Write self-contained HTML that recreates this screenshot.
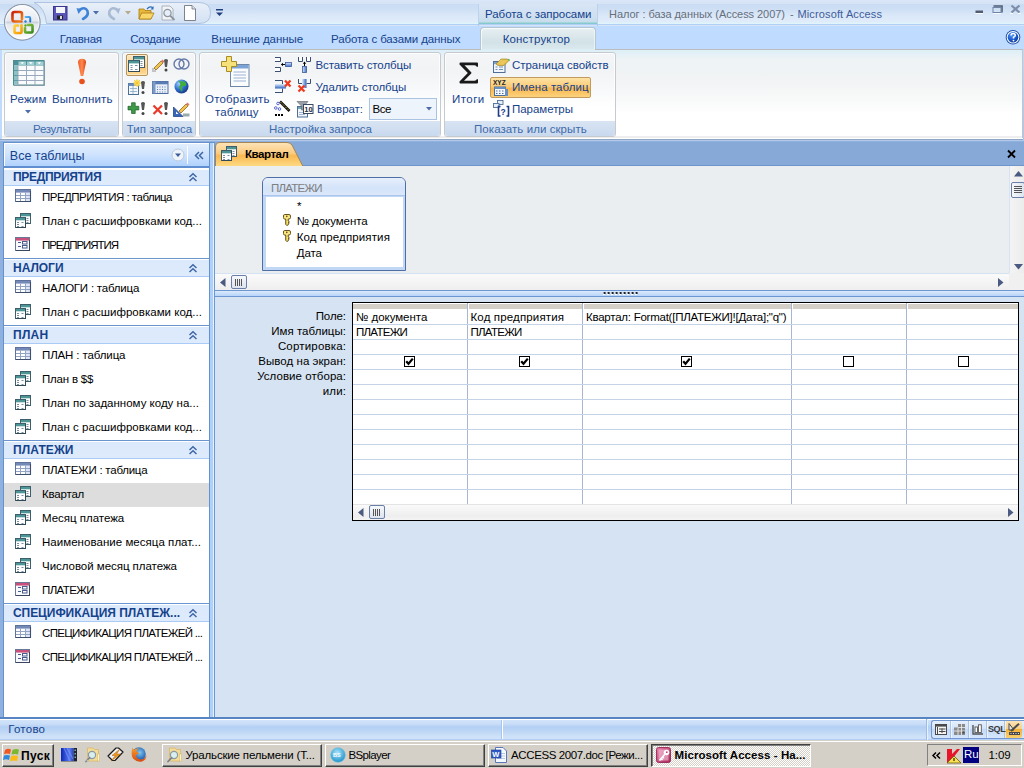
<!DOCTYPE html><html><head><meta charset="utf-8"><style>
*{box-sizing:border-box;margin:0;padding:0}
html,body{width:1024px;height:768px;overflow:hidden;background:#8EB1E0;font-family:"Liberation Sans",sans-serif;font-size:11px;color:#000}
.a{position:absolute;white-space:nowrap}
svg{position:absolute;overflow:visible}
.rt{color:#15428B;font-size:11.5px;position:absolute;white-space:nowrap}
.gl{position:absolute;color:#3E6AAA;font-size:11.5px;white-space:nowrap}
.grp{position:absolute;top:52px;height:85px;border:1px solid #C6C9CE;border-radius:3px;background:linear-gradient(#F3F5F7 0%,#F1F3F5 20%,#F8F9FA 45%,#FFFFFF 65%,#FFFFFF 100%);box-shadow:inset 0 0 0 1px rgba(255,255,255,.8)}
.glb{position:absolute;left:0;right:0;bottom:0;height:15px;background:linear-gradient(#D8E4F3,#C9D9EE);border-radius:0 0 3px 3px}
.ni{position:absolute;left:42px;font-size:11.5px;white-space:nowrap;color:#000}
.gh{position:absolute;left:4px;width:205px;height:19px;border-top:1px solid #6B95CE;background:linear-gradient(#DBE9FC,#DEEBFC);box-shadow:inset 0 1px 0 #fff;border-bottom:1px solid #A9CBF5}
.ght{position:absolute;left:9px;top:2px;font-weight:bold;font-size:11.5px;color:#15428B}
.lbl{position:absolute;right:679px;font-size:11px;white-space:nowrap;text-align:right}
.cell{position:absolute;font-size:11px;white-space:nowrap}
.tb{position:absolute;top:744px;height:23px;background:#D4D0C8;border:1px solid;border-color:#fff #404040 #404040 #fff;box-shadow:inset -1px -1px 0 #808080,inset 1px 1px 0 #D4D0C8;font-size:11px}
.tbt{position:absolute;left:24px;top:5px;white-space:nowrap}
</style></head><body>
<div class="a" style="left:0;top:0;width:1024px;height:25px;background:linear-gradient(#DAE7FB 0,#D8E5F6 2px,#D6E4F4 3.5px,#C9DCF4 4px,#CCDEF4 8px,#DBE8F8 16px,#E0ECFA 22px,#E0F4FC 23px,#E0F4FC 24px)"></div>
<div class="a" style="left:0;top:24px;width:1024px;height:1px;background:#B2CFF4"></div>
<div class="a" style="left:0;top:25px;width:1024px;height:1px;background:#D5E4F6"></div>
<svg style="left:0;top:0" width="215" height="26"><defs><linearGradient id="qg" x1="0" y1="0" x2="0" y2="1"><stop offset="0" stop-color="#E9F0F9"/><stop offset="1" stop-color="#D3E1F3"/></linearGradient></defs><path d="M34 2.5 H199 Q210.5 2.5 210.5 13 Q210.5 23.5 199 23.5 H46.5 Q45 7 34 2.5Z" fill="url(#qg)" stroke="#AFC4E0" stroke-width="1"/></svg>
<svg style="left:53px;top:6px" width="15" height="15" viewBox="0 0 15 15">
<rect x=".5" y=".5" width="13.5" height="13.5" fill="#5A55B8" stroke="#3A3690"/>
<rect x="3" y="1" width="9" height="6" fill="#F4F6FA"/><rect x="4" y="9.5" width="6" height="4" fill="#222"/><rect x="7" y="10" width="2" height="3" fill="#ddd"/></svg>
<svg style="left:76px;top:6px" width="14" height="15" viewBox="0 0 14 15">
<path d="M3 4 Q9 0 11.5 5 Q13 10 7 13" fill="none" stroke="#3F83D8" stroke-width="2.6" stroke-linecap="round"/>
<path d="M0.5 2 L6 3.5 L2.5 8 Z" fill="#3F83D8"/></svg>
<svg style="left:93px;top:11px" width="7" height="4"><path d="M0 0 H6 L3 3.5Z" fill="#4B6DA8"/></svg>
<svg style="left:107px;top:6px" width="14" height="15" viewBox="0 0 14 15">
<path d="M11 4 Q5 0 2.5 5 Q1 10 7 13" fill="none" stroke="#A9BBD2" stroke-width="2.6" stroke-linecap="round"/>
<path d="M13.5 2 L8 3.5 L11.5 8 Z" fill="#A9BBD2"/></svg>
<svg style="left:125px;top:11px" width="7" height="4"><path d="M0 0 H6 L3 3.5Z" fill="#B7A98A"/></svg>
<svg style="left:138px;top:5px" width="17" height="16" viewBox="0 0 17 16">
<path d="M1 4 H6 L7 5.5 H13 V14 H1Z" fill="#E8B83A" stroke="#A97B12" stroke-width=".8"/>
<path d="M1 14 L3.5 8 H16 L13 14Z" fill="#F8D66A" stroke="#A97B12" stroke-width=".8"/>
<path d="M9 4 Q12 0.5 15 3" fill="none" stroke="#2F6DB8" stroke-width="1.2"/><path d="M15.5 1 V4.5 H12.5Z" fill="#2F6DB8"/></svg>
<svg style="left:161px;top:5px" width="15" height="16" viewBox="0 0 15 16">
<path d="M1 1 H9 L12 4 V15 H1Z" fill="#F3F4F6" stroke="#9AA3AE" stroke-width=".8"/>
<circle cx="6.5" cy="8" r="3.6" fill="#E6EEF7" stroke="#8D97A3" stroke-width="1.3"/><path d="M9 10.5 L13.5 15" stroke="#8D97A3" stroke-width="2"/></svg>
<svg style="left:184px;top:5px" width="12" height="16" viewBox="0 0 12 16">
<path d="M.5 .5 H8 L11.5 4 V15.5 H.5Z" fill="#FFFFFF" stroke="#6E7682" stroke-width=".9"/><path d="M8 .5 V4 H11.5" fill="#DDE2E8" stroke="#6E7682" stroke-width=".8"/></svg>
<svg style="left:216px;top:9px" width="7" height="8"><rect x="0" y="0" width="7" height="1.5" fill="#1F3F7F"/><path d="M0 3.5 H7 L3.5 7Z" fill="#1F3F7F"/></svg>
<div class="a" style="left:478px;top:4px;width:120px;height:20px;background:linear-gradient(#D8E6F5,#CFE0F1 60%,#C4DCEA);border-left:1px solid #BCD2EA;border-right:1px solid #BCD2EA"></div>
<div class="a" style="left:479px;top:22px;width:118px;height:1px;background:#A6D6DC"></div>
<div class="a" style="left:479px;top:23px;width:118px;height:1px;background:#86C8D0"></div>
<div class="a" style="left:478px;top:24px;width:1px;height:26px;background:#A9CBEF"></div>
<div class="a" style="left:597px;top:24px;width:1px;height:26px;background:#A9CBEF"></div>
<div class="a" style="left:485.00px;top:8px;font-size:11.5px;color:#15428B;line-height:normal;letter-spacing:-0.044px">Работа с запросами</div>
<div class="a" style="left:609.00px;top:8px;font-size:11px;color:#666F7D;line-height:normal;letter-spacing:-0.051px">Налог : база данных (Access 2007)</div>
<div class="a" style="left:790.00px;top:8px;font-size:11px;color:#666F7D;line-height:normal">-</div>
<div class="a" style="left:797.50px;top:8px;font-size:11px;color:#3E5C9A;line-height:normal;letter-spacing:0.132px">Microsoft Access</div>
<svg style="left:975px;top:10px" width="9" height="5"><rect x="0.5" y="0.5" width="7.5" height="2.5" fill="#4F5C72"/><rect x="0.5" y="3" width="7.5" height="1" fill="#fff" opacity=".8"/></svg>
<svg style="left:992px;top:4px" width="11" height="11"><path d="M1.5 2 H10 V8.5" fill="none" stroke="#4F5C72" stroke-width="1.6"/><rect x="1" y="3.5" width="8" height="5" fill="none" stroke="#6E85A8" stroke-width="1"/><rect x="1" y="9" width="8" height="1" fill="#fff" opacity=".8"/></svg>
<svg style="left:1010px;top:4px" width="11" height="11"><path d="M1.5 1.5 L9.5 8.5 M9.5 1.5 L1.5 8.5" stroke="#7C8EAA" stroke-width="2.2"/><path d="M0.5 9.5 H3 M8 9.5 H10.5" stroke="#fff" stroke-width="1"/></svg>
<div class="a" style="left:0;top:26px;width:1024px;height:25px;background:#BFDBFF"></div>
<div class="a" style="left:59.80px;top:33px;font-size:11.5px;color:#15428B;line-height:normal;letter-spacing:-0.262px">Главная</div>
<div class="a" style="left:130.20px;top:33px;font-size:11.5px;color:#15428B;line-height:normal;letter-spacing:-0.195px">Создание</div>
<div class="a" style="left:211.30px;top:33px;font-size:11.5px;color:#15428B;line-height:normal;letter-spacing:-0.052px">Внешние данные</div>
<div class="a" style="left:331.00px;top:33px;font-size:11.5px;color:#15428B;line-height:normal;letter-spacing:-0.104px">Работа с базами данных</div>
<div class="a" style="left:480px;top:27px;width:116px;height:25px;border:1px solid #B4C6CF;border-bottom:none;border-radius:4px 4px 0 0;background:linear-gradient(#E8F0F3,#DCE8EC 30%,#D2E2E7 60%,#DCECF0);box-shadow:inset 1px 1px 0 rgba(255,255,255,.7),inset -1px 0 0 rgba(255,255,255,.5)"></div>
<div class="a" style="left:502.70px;top:33px;font-size:11.5px;color:#15428B;line-height:normal;letter-spacing:0.163px">Конструктор</div>
<svg style="left:1005px;top:29px" width="17" height="17" viewBox="0 0 17 17"><defs><radialGradient id="hg" cx="40%" cy="30%" r="70%"><stop offset="0" stop-color="#5A9BF5"/><stop offset=".6" stop-color="#1D5FD0"/><stop offset="1" stop-color="#0E3A9A"/></radialGradient></defs>
<circle cx="8" cy="8.3" r="7.3" fill="#1B4FA8"/><circle cx="8" cy="8.3" r="6.3" fill="#fff"/><circle cx="8" cy="8.3" r="5.3" fill="url(#hg)"/>
<path d="M6 6.5 Q6 4.5 8.2 4.5 Q10.3 4.5 10.3 6.3 Q10.3 7.6 8.5 8.3 V9.6" fill="none" stroke="#fff" stroke-width="1.5"/><circle cx="8.5" cy="11.6" r=".9" fill="#fff"/></svg>
<div class="a" style="left:0;top:49px;width:1024px;height:93px;background:linear-gradient(#BCBCBC 0,#BCBCBC 1px,#DCEFF8 1px,#EEF3F5 10px,#F1F3F4 30px,#FAFBFB 55px,#FFFFFF 65px,#FFFFFF 87px,#DCDCDC 88px,#FFFFFF 89px,#FFFFFF 90px,#8FA5C6 90px,#8FA5C6 91px,#B3C9E7 91px,#B3C9E7 92px,#8EB1E0 92px)"></div>
<div class="a" style="left:0;top:50px;width:2px;height:89px;background:#BFDBFF"></div>
<div class="a" style="left:481px;top:49px;width:114px;height:1px;background:#DCEEF4"></div>
<div class="a" style="left:1022px;top:50px;width:1px;height:88px;background:linear-gradient(#C8C8C8,#C4C4C4)"></div>
<div class="a" style="left:1023px;top:49px;width:1px;height:91px;background:linear-gradient(#BCD9FE,#A6C6EE)"></div>
<svg style="left:0;top:0" width="46" height="46" viewBox="0 0 46 46">
<defs><linearGradient id="ob" x1="0" y1="0" x2="0" y2="1"><stop offset="0" stop-color="#FBFCFD"/><stop offset=".45" stop-color="#E6EAF0"/><stop offset=".5" stop-color="#C9D1DC"/><stop offset=".56" stop-color="#E3E8EE"/><stop offset="1" stop-color="#FFFFFF"/></linearGradient>
<linearGradient id="lr" x1="0" y1="0" x2="1" y2="1"><stop offset="0" stop-color="#C8200A"/><stop offset="1" stop-color="#F38A1A"/></linearGradient>
<linearGradient id="ly" x1="0" y1="0" x2="1" y2="1"><stop offset="0" stop-color="#FFD040"/><stop offset="1" stop-color="#F59A00"/></linearGradient>
<linearGradient id="lg" x1="0" y1="0" x2="1" y2="1"><stop offset="0" stop-color="#8CC63F"/><stop offset="1" stop-color="#3C8A1E"/></linearGradient>
<linearGradient id="lb" x1="0" y1="0" x2="1" y2="1"><stop offset="0" stop-color="#5AB4F0"/><stop offset="1" stop-color="#1E6ED0"/></linearGradient></defs>
<circle cx="22.3" cy="22.3" r="17.8" fill="url(#ob)" stroke="#8793A4" stroke-width="1.1"/>
<circle cx="22.3" cy="22.3" r="16.6" fill="none" stroke="#FFFFFF" stroke-width=".8" opacity=".8"/>
<path d="M20 21.5 H14.5 Q12.5 21.5 12.5 19.5 V14 Q12.5 12 14.5 12 H20 Q22 12 22 14 V19" fill="none" stroke="url(#lr)" stroke-width="2.6" stroke-linecap="round"/>
<path d="M25.5 17 H29 Q30.2 17 30.2 18.2 V21.5" fill="none" stroke="url(#lb)" stroke-width="2" stroke-linecap="round"/>
<path d="M21.5 25.5 V32 Q21.5 33 20.5 33 H15.5 Q14.5 33 14.5 32 V26.5 Q14.5 25.5 15.5 25.5 H18" fill="none" stroke="url(#ly)" stroke-width="2.6" stroke-linecap="round"/>
<path d="M25 28 V31.5 Q25 32.5 26 32.5 H31.5 Q32.5 32.5 32.5 31.5 V26 Q32.5 25 31.5 25 H28" fill="none" stroke="url(#lg)" stroke-width="2.6" stroke-linecap="round"/>
<circle cx="21.5" cy="21.5" r="1.2" fill="#E8601A"/><circle cx="25.5" cy="21.5" r="1.2" fill="#2A7FD8"/><circle cx="21.5" cy="25.5" r="1.2" fill="#F8B830"/><circle cx="25.5" cy="25.5" r="1.2" fill="#5AAA2A"/>
</svg>
<div class="grp" style="left:4px;width:115px"><div class="glb"></div></div>
<div class="a" style="left:33.00px;top:123px;font-size:11.5px;color:#3E6AAA;line-height:normal;letter-spacing:-0.285px">Результаты</div>
<div class="grp" style="left:122px;width:74px"><div class="glb"></div></div>
<div class="a" style="left:126.70px;top:123px;font-size:11.5px;color:#3E6AAA;line-height:normal;letter-spacing:0.020px">Тип запроса</div>
<div class="grp" style="left:199px;width:242px"><div class="glb"></div></div>
<div class="a" style="left:269.00px;top:123px;font-size:11.5px;color:#3E6AAA;line-height:normal;letter-spacing:0.022px">Настройка запроса</div>
<div class="grp" style="left:444px;width:172px"><div class="glb"></div></div>
<div class="a" style="left:474.00px;top:123px;font-size:11.5px;color:#3E6AAA;line-height:normal;letter-spacing:0.065px">Показать или скрыть</div>
<svg style="left:13px;top:60px" width="32" height="26" viewBox="0 0 32 26">
<rect x=".5" y=".5" width="30.5" height="24.5" fill="#FAFBFD" stroke="#4E8A90"/>
<rect x="1" y="1" width="30" height="4.5" fill="#4E9098"/><rect x="5.5" y="1.5" width="7.5" height="3.5" fill="#9FD0D2"/><rect x="14" y="1.5" width="7.5" height="3.5" fill="#9FD0D2"/><rect x="22.5" y="1.5" width="8" height="3.5" fill="#9FD0D2"/>
<rect x="1" y="5.5" width="4" height="19" fill="#8CC2C5"/>
<path d="M5 5.5 V25 M13.5 5.5 V25 M22 5.5 V25 M1 10.5 H31 M1 15.5 H31 M1 20.5 H31" stroke="#9AA9BE" stroke-width="1"/>
<path d="M1 10.5 H5 M1 15.5 H5 M1 20.5 H5" stroke="#5E9CA2" stroke-width="1"/>
<path d="M7.5 2.3 H11 L9.25 4.3Z M16 2.3 H19.5 L17.75 4.3Z M24.5 2.3 H28 L26.25 4.3Z" fill="#fff"/>
<path d="M1 25.5 H31.5 V1" fill="none" stroke="#6F8090" stroke-width="1" opacity=".6"/></svg>
<svg style="left:77px;top:58px" width="10" height="28" viewBox="0 0 10 28">
<defs><linearGradient id="ex" x1="0" x2="1"><stop offset="0" stop-color="#F05A24"/><stop offset=".5" stop-color="#FF8A50"/><stop offset="1" stop-color="#D8400F"/></linearGradient></defs>
<path d="M5 .8 Q9 .8 9 4.5 L6.2 18 H3.8 L1 4.5 Q1 .8 5 .8Z" fill="url(#ex)"/><circle cx="5" cy="23.5" r="2.8" fill="#E9521C"/></svg>
<div class="a" style="left:10.00px;top:93px;font-size:11.5px;color:#15428B;line-height:normal;letter-spacing:0.236px">Режим</div>
<div class="a" style="left:52.00px;top:93px;font-size:11.5px;color:#15428B;line-height:normal;letter-spacing:0.181px">Выполнить</div>
<svg style="left:25px;top:110px" width="7" height="4"><path d="M0 0 H6 L3 3.5Z" fill="#4B6DA8"/></svg>
<div class="a" style="left:126px;top:54px;width:22px;height:22px;border:1px solid #B8945A;border-radius:2px;background:linear-gradient(#FCE6BE,#F9D08C 45%,#F8C070 55%,#FCDC98);box-shadow:inset 0 0 0 1px rgba(255,255,255,.35)"></div>
<svg style="left:128px;top:56px" width="18" height="17" viewBox="0 0 18 17">
<rect x="5.5" y=".5" width="11" height="11" fill="#FFFFFF" stroke="#3F5E6C"/><rect x="6" y="1" width="10" height="2.4" fill="#4C9696"/>
<path d="M12.5 5.5 H14.5 M12.5 7.5 H14.5 M12.5 9.5 H14.5" stroke="#7890A0" stroke-width="1"/>
<rect x=".5" y="4.5" width="11" height="11" fill="#FFFFFF" stroke="#3F5E6C"/><rect x="1" y="5" width="10" height="2.4" fill="#4C9696"/>
<path d="M2.5 9.5 H4.5 M2.5 11.5 H4.5 M2.5 13.5 H4.5 M7 9.5 H9.5 M7 13.5 H9.5" stroke="#7890A0" stroke-width="1"/><path d="M1 15.5 H12 M11.5 5 V16" stroke="#2E4450" stroke-width=".8"/></svg>
<svg style="left:152px;top:57px" width="17" height="16" viewBox="0 0 17 16">
<path d="M2 11 L9 4 L11 6 L4 13Z" fill="#F2C44F" stroke="#7A5A16" stroke-width=".7"/><path d="M9 4 L10.5 2.5 L12.5 4.5 L11 6Z" fill="#D97A6A"/>
<path d="M.5 12 h1 M.5 14 h1 M2.5 14 h1" stroke="#333" stroke-width="1"/>
<path d="M12 3 Q14 1 16 3 L15 10 H13Z" fill="#555"/><circle cx="14" cy="13" r="1.5" fill="#444"/></svg>
<svg style="left:173px;top:58px" width="17" height="12" viewBox="0 0 17 12">
<circle cx="6" cy="6" r="5" fill="none" stroke="#6479A8" stroke-width="1.4"/><circle cx="11" cy="6" r="5" fill="none" stroke="#6479A8" stroke-width="1.4"/></svg>
<svg style="left:128px;top:79px" width="18" height="16" viewBox="0 0 18 16">
<rect x=".5" y="4.5" width="10" height="11" fill="#F4F8FB" stroke="#4C6F9A"/><rect x=".5" y="4.5" width="10" height="2.5" fill="#6A8FC0"/>
<path d="M2 9.5 H9 M2 12.5 H9 M5 7 V15" stroke="#8AA4C4" stroke-width=".8"/>
<circle cx="9" cy="4" r="3" fill="#FCE36A"/><path d="M9 0 V8 M5 4 H13 M6 1 L12 7 M12 1 L6 7" stroke="#F4C430" stroke-width=".8"/>
<path d="M13 3 Q15 1 17 3 L16 10 H14Z" fill="#555"/><circle cx="15" cy="13.5" r="1.5" fill="#444"/></svg>
<svg style="left:152px;top:81px" width="17" height="13" viewBox="0 0 17 13">
<rect x=".5" y=".5" width="15.5" height="12" fill="#E8EEF8" stroke="#4F6FA0"/><rect x=".5" y=".5" width="15.5" height="2.8" fill="#5A7CB4"/><rect x=".5" y=".5" width="3" height="12" fill="#7D98C4"/>
<path d="M5 6 h1 M7.5 6 h1 M10 6 h1 M12.5 6 h1 M5 8.5 h1 M7.5 8.5 h1 M10 8.5 h1 M12.5 8.5 h1 M5 11 h1 M7.5 11 h1 M10 11 h1 M12.5 11 h1" stroke="#5A7CB4" stroke-width="1.2"/></svg>
<svg style="left:174px;top:79px" width="15" height="15" viewBox="0 0 15 15">
<defs><radialGradient id="gl" cx="35%" cy="30%" r="70%"><stop offset="0" stop-color="#9FD0FF"/><stop offset=".6" stop-color="#2D6FD0"/><stop offset="1" stop-color="#1B3F8A"/></radialGradient></defs>
<circle cx="7.5" cy="7.5" r="7" fill="url(#gl)"/><path d="M4 2.5 Q7 4 6 6.5 Q4 8 6 10 L8 13 Q9 10 8 8 Q10 6 12 7 Q13 4 10 2 Q8 3 7 2Z" fill="#3FAE3F"/></svg>
<svg style="left:128px;top:101px" width="18" height="16" viewBox="0 0 18 16">
<path d="M4 3 H8 V7 H12 V11 H8 V15 H4 V11 H0 V7 H4Z" transform="translate(0,-1) scale(.9)" fill="#3E9A46" stroke="#1F5F2A" stroke-width=".8"/>
<path d="M13 2 Q15 0 17 2 L16 9 H14Z" fill="#555"/><circle cx="15" cy="12.5" r="1.5" fill="#444"/></svg>
<svg style="left:152px;top:101px" width="17" height="16" viewBox="0 0 17 16">
<path d="M1.5 4.5 L10 13 M10 4.5 L1.5 13" stroke="#E83A2A" stroke-width="2.2"/>
<path d="M12 2 Q14 0 16 2 L15 9 H13Z" fill="#555"/><circle cx="14" cy="12.5" r="1.5" fill="#444"/></svg>
<svg style="left:173px;top:101px" width="17" height="16" viewBox="0 0 17 16">
<path d="M.5 15.5 V6 L10 15.5Z" fill="#3A66B8" stroke="#24468A" stroke-width=".8"/><path d="M3 13 V10.5 L5.5 13Z" fill="#fff"/>
<rect x="10" y="12.5" width="6.5" height="3" fill="#9AA"/>
<path d="M6 10 L13 3 L15 5 L8 12Z" fill="#F2C44F" stroke="#7A5A16" stroke-width=".7"/><path d="M13 3 L14.5 1.5 L16.5 3.5 L15 5Z" fill="#D97A6A"/></svg>
<svg style="left:221px;top:56px" width="30" height="32" viewBox="0 0 30 32">
<rect x="9.5" y="8.5" width="18.5" height="22" fill="#FBFCFE" stroke="#6E86A8"/><rect x="10" y="9" width="17.5" height="3.5" fill="#7BA3D8"/>
<path d="M12.5 16 H25 M12.5 19 H25 M12.5 22 H25 M12.5 25 H25" stroke="#9DB4D2" stroke-width="1"/>
<path d="M5.5 .5 H10.5 V5.5 H15.5 V10.5 H10.5 V15.5 H5.5 V10.5 H.5 V5.5 H5.5Z" fill="#F6E27A" stroke="#A88C22" stroke-width="1"/></svg>
<div class="a" style="left:205.00px;top:93px;font-size:11.5px;color:#15428B;line-height:normal;letter-spacing:0.202px">Отобразить</div>
<div class="a" style="left:215.00px;top:106px;font-size:11.5px;color:#15428B;line-height:normal;letter-spacing:0.071px">таблицу</div>
<svg style="left:274px;top:56px" width="18" height="17" viewBox="0 0 18 17"><defs><linearGradient id="bb1" x1="0" y1="0" x2="0" y2="1"><stop offset="0" stop-color="#D8E6FA"/><stop offset="1" stop-color="#3F6FC8"/></linearGradient></defs>
<path d="M1 1.5 H6.5 V5.5 H1" fill="#fff" stroke="#3A4E70" stroke-width="1"/><path d="M1 11.5 H6.5 V15.5 H1" fill="#fff" stroke="#3A4E70" stroke-width="1"/>
<rect x="11.5" y="6.5" width="6" height="4" fill="url(#bb1)" stroke="#3A5A98" stroke-width=".8"/><path d="M7.5 8.5 H11" stroke="#000" stroke-width="1"/><path d="M7 8.5 L9 6.8 V10.2Z" fill="#000"/></svg>
<svg style="left:297px;top:56px" width="16" height="17" viewBox="0 0 16 17"><defs><linearGradient id="bb2" x1="0" y1="0" x2="1" y2="0"><stop offset="0" stop-color="#D8E6FA"/><stop offset="1" stop-color="#3F6FC8"/></linearGradient></defs>
<path d="M1.5 1 V5.5 H5.5 V1" fill="#fff" stroke="#3A4E70" stroke-width="1"/><path d="M9.5 1 V5.5 H13.5 V1" fill="#fff" stroke="#3A4E70" stroke-width="1"/>
<rect x="5.5" y="10.5" width="4" height="6" fill="url(#bb2)" stroke="#3A5A98" stroke-width=".8"/><path d="M7.5 6.5 V10" stroke="#000" stroke-width="1"/><path d="M7.5 5.5 L5.8 7.8 H9.2Z" fill="#000"/></svg>
<div class="a" style="left:315.50px;top:59px;font-size:11.5px;color:#15428B;line-height:normal;letter-spacing:-0.088px">Вставить столбцы</div>
<svg style="left:274px;top:79px" width="18" height="15" viewBox="0 0 18 15"><defs><linearGradient id="bb3" x1="0" y1="0" x2="0" y2="1"><stop offset="0" stop-color="#E0ECFC"/><stop offset="1" stop-color="#2F62C0"/></linearGradient></defs>
<path d="M1 1.5 H8.5 V5 M8.5 9.5 V13.5 H1" fill="none" stroke="#3A4E70" stroke-width="1"/><rect x="1" y="5" width="11" height="4.5" fill="url(#bb3)"/>
<path d="M11 1.5 L16.5 7.5 M16.5 1.5 L11 7.5" stroke="#F03A20" stroke-width="2.2"/></svg>
<svg style="left:297px;top:78px" width="16" height="15" viewBox="0 0 16 15"><defs><linearGradient id="bb4" x1="0" y1="0" x2="1" y2="0"><stop offset="0" stop-color="#E0ECFC"/><stop offset="1" stop-color="#2F62C0"/></linearGradient></defs>
<path d="M1.5 1 V5.5 H5 M9.5 5.5 H13.5 V1" fill="none" stroke="#3A4E70" stroke-width="1"/><rect x="5" y="1" width="4.5" height="9" fill="url(#bb4)"/>
<path d="M1.5 7.5 L7.5 13.5 M7.5 7.5 L1.5 13.5" stroke="#F03A20" stroke-width="2.2"/></svg>
<div class="a" style="left:315.50px;top:81px;font-size:11.5px;color:#15428B;line-height:normal;letter-spacing:-0.106px">Удалить столбцы</div>
<svg style="left:274px;top:100px" width="18" height="17" viewBox="0 0 18 17">
<path d="M6 1.5 L15.5 11" stroke="#111" stroke-width="2.6"/><path d="M6.5 2 L15 10.5" stroke="#F0D040" stroke-width=".9" stroke-dasharray="1.2 1.2"/>
<circle cx="4" cy="3.5" r="1.3" fill="#fff" stroke="#4A58D0" stroke-width=".9"/><circle cx="1.8" cy="8" r="1.3" fill="#fff" stroke="#4A58D0" stroke-width=".9"/><circle cx="5.5" cy="9" r="1.3" fill="#fff" stroke="#4A58D0" stroke-width=".9"/>
<rect x="1" y="14" width="2" height="2" fill="#000"/><rect x="4" y="14" width="2" height="2" fill="#000"/><rect x="7" y="14" width="2" height="2" fill="#000"/></svg>
<svg style="left:296px;top:101px" width="18" height="17" viewBox="0 0 18 17">
<rect x="1.5" y="5.5" width="10" height="10.5" fill="#F2F6FB" stroke="#4F6F98"/><rect x="2" y="6" width="9" height="2" fill="#6FA8B0"/><path d="M3 11.5 H9 M3 13.5 H9" stroke="#8AA4C4" stroke-width=".8"/>
<path d="M1 .5 H12 L8 5 V9 H5.5 V5Z" fill="#9AA0A8" stroke="#5A626E" stroke-width=".6"/>
<rect x="7.5" y="3.5" width="9.5" height="9" fill="#fff" stroke="#3A4A60" stroke-width="1"/><text x="8.3" y="11" font-size="7.5" font-weight="bold" font-family="Liberation Sans" fill="#223044">10</text></svg>
<div class="a" style="left:317.00px;top:103px;font-size:11.5px;color:#15428B;line-height:normal;letter-spacing:-0.046px">Возврат:</div>
<div class="a" style="left:369px;top:98px;width:68px;height:22px;border:1px solid #ABC3E3;background:#EEF4FB"></div>
<div class="a" style="left:372.50px;top:103px;font-size:11.5px;color:#000;line-height:normal;letter-spacing:-0.408px">Все</div>
<svg style="left:426px;top:107px" width="7" height="4"><path d="M0 0 H6 L3 3.5Z" fill="#4B6DA8"/></svg>
<svg style="left:459px;top:62px" width="20" height="22" viewBox="0 0 20 22"><path d="M1.5 .5 H18 Q19 .5 19 1.5 V4 Q19 5 18 5 Q17.3 3.2 15.5 3.2 H5.5 L12.2 10.3 Q12.7 11 12.2 11.6 L5 18.8 H15.5 Q17.3 18.8 18 17 Q19 17 19 18 V20.5 Q19 21.5 18 21.5 H1.5 Q.5 21.5 .5 20.5 V19.5 L8.8 11 L.5 2.6 V1.5 Q.5 .5 1.5 .5Z" fill="#1A1A1A"/></svg>
<div class="a" style="left:452.00px;top:93px;font-size:11.5px;color:#15428B;line-height:normal;letter-spacing:0.446px">Итоги</div>
<svg style="left:493px;top:58px" width="17" height="15" viewBox="0 0 17 15">
<rect x=".5" y="3.5" width="11.5" height="11" fill="#F2F6FB" stroke="#4F6F98"/><rect x="1" y="4" width="10.5" height="2.2" fill="#7FA2D0"/>
<path d="M2.5 9 H4.5 M6 9 H10 M2.5 11.5 H4.5 M6 11.5 H10" stroke="#6F8FB8" stroke-width="1"/>
<path d="M3 6 L8 1 H14.5 L16 2.5 L11 7.5 H5Z" fill="#E2BE4A" stroke="#9A7A18" stroke-width=".6"/><path d="M5 5.5 L9 1.5 M7 6.5 L11 2.5 M9 6.5 L13 2.5" stroke="#F5DC80" stroke-width=".8"/><path d="M14.5 1 L16.5 1 L16.5 3.5Z" fill="#4CAF50"/></svg>
<div class="a" style="left:512.00px;top:59px;font-size:11.5px;color:#15428B;line-height:normal;letter-spacing:-0.033px">Страница свойств</div>
<div class="a" style="left:490px;top:77px;width:101px;height:21px;border:1px solid #C29B5C;border-radius:2px;background:linear-gradient(#FDE3A5,#FBCB78 45%,#F9B84E 55%,#FCD27E)"></div>
<svg style="left:493px;top:79px" width="17" height="17" viewBox="0 0 17 17">
<text x="0" y="6" font-size="6.5" font-weight="bold" font-family="Liberation Sans" fill="#222">XYZ</text>
<rect x="1.5" y="8" width="11" height="8.5" fill="#F4F8FB" stroke="#4C6F9A"/><rect x="1.5" y="8" width="11" height="2" fill="#6A8FC0"/>
<path d="M3 12 h1.5 M6 12 h1.5 M9 12 h1.5 M3 14.5 h1.5 M6 14.5 h1.5 M9 14.5 h1.5" stroke="#4C6F9A" stroke-width="1"/><rect x="12" y="10" width="3" height="7" fill="#6A8FC0"/></svg>
<div class="a" style="left:512.00px;top:81px;font-size:11.5px;color:#15428B;line-height:normal;letter-spacing:0.061px">Имена таблиц</div>
<svg style="left:493px;top:100px" width="17" height="17" viewBox="0 0 17 17">
<rect x="4.5" y=".5" width="5.5" height="4" fill="#E6EEF8" stroke="#4F6F98" stroke-width=".9"/><rect x=".5" y="3.5" width="5.5" height="4" fill="#E6EEF8" stroke="#4F6F98" stroke-width=".9"/>
<path d="M7.5 6.5 H5.5 V16 H7.5 M13.5 6.5 H15.5 V16 H13.5" fill="none" stroke="#1D3E86" stroke-width="1.6"/><text x="7.6" y="14.5" font-size="8.5" font-weight="bold" font-family="Liberation Sans" fill="#1D3E86">?</text></svg>
<div class="a" style="left:512.00px;top:103px;font-size:11.5px;color:#15428B;line-height:normal;letter-spacing:-0.038px">Параметры</div>
<div class="a" style="left:3px;top:142px;width:207px;height:576px;background:#fff;border:1px solid #6591CD;border-bottom:none"></div>
<div class="a" style="left:4px;top:143px;width:205px;height:25px;background:linear-gradient(#E3EFFD,#CFE3FE 50%,#B0D2FE);border-bottom:2px solid #5F8FD0;box-shadow:inset 1px 1px 0 #fff"></div>
<div class="a" style="left:9.80px;top:149px;font-size:12.5px;color:#15428B;line-height:normal">Все таблицы</div>
<svg style="left:171px;top:148px" width="14" height="14" viewBox="0 0 14 14"><circle cx="7" cy="7" r="6" fill="#EEF3FA" stroke="#BCC9DA"/><path d="M4 5.5 H10 L7 9Z" fill="#3A5C9A"/></svg>
<div class="a" style="left:187px;top:146px;width:1px;height:18px;background:#fff"></div>
<svg style="left:194px;top:151px" width="10" height="9" viewBox="0 0 10 8"><path d="M5 .5 L1.5 4 L5 7.5 M9 .5 L5.5 4 L9 7.5" fill="none" stroke="#3E67A6" stroke-width="1.5"/></svg>
<div class="gh" style="top:168px;border-top-color:#fff;height:18px"></div>
<svg style="left:189px;top:173px" width="8" height="9" viewBox="0 0 8 9"><path d="M.5 4 L4 .8 L7.5 4 M.5 8 L4 4.8 L7.5 8" fill="none" stroke="#3E67A6" stroke-width="1.5"/></svg>
<div class="a" style="left:13.00px;top:170px;font-size:12px;color:#15428B;line-height:normal;font-weight:bold;letter-spacing:-0.314px">ПРЕДПРИЯТИЯ</div>
<svg style="left:15px;top:189px" width="17" height="14" viewBox="0 0 17 14">
<rect x=".5" y=".5" width="15" height="12" fill="#FFFFFF" stroke="#5F729C"/><rect x="1" y="1" width="14" height="2.6" fill="#7389B8"/>
<rect x="11" y="4" width="4" height="8.5" fill="#DCE6F8"/>
<path d="M1 6.5 H15 M1 9.5 H15 M5.5 3.5 V12.5 M10.5 3.5 V12.5" stroke="#93A3C3" stroke-width="1"/><path d="M1 12.5 H16 M15.5 2 V13" stroke="#3E4E6E" stroke-width="1.1"/></svg>
<div class="a" style="left:42.00px;top:191px;font-size:11.5px;color:#000;line-height:normal;letter-spacing:-0.515px">ПРЕДПРИЯТИЯ : таблица</div>
<svg style="left:15px;top:213px" width="17" height="16" viewBox="0 0 17 16">
<rect x="5.5" y=".5" width="10" height="10" fill="#FFFFFF" stroke="#3F5E6C"/><rect x="6" y="1" width="9" height="2.3" fill="#4C9696"/>
<path d="M11.5 5.5 H13.5 M11.5 7.5 H13.5 M11.5 9.5 H13.5" stroke="#7890A0" stroke-width="1"/>
<rect x=".5" y="4.5" width="10" height="10" fill="#FFFFFF" stroke="#3F5E6C"/><rect x="1" y="5" width="9" height="2.3" fill="#4C9696"/>
<path d="M2 9.5 H4 M2 11.5 H4 M2 13.5 H4 M6.5 9.5 H8.5 M6.5 13.5 H8.5" stroke="#7890A0" stroke-width="1"/><path d="M1 14.5 H11 M10.5 5 V15" stroke="#2E4450" stroke-width=".8"/></svg>
<div class="a" style="left:42.00px;top:215px;font-size:11.5px;color:#000;line-height:normal;letter-spacing:0.030px">План с расшифровками код...</div>
<svg style="left:15px;top:237px" width="16" height="15" viewBox="0 0 16 15">
<rect x=".5" y=".5" width="14" height="13" fill="#F8FAFE" stroke="#6A7898"/><rect x="1" y="1" width="13" height="2.6" fill="#C8507A"/>
<path d="M3 5.5 H6 M3 9.5 H6" stroke="#4A5A8A" stroke-width="1"/><rect x="7.5" y="4.5" width="4.5" height="2.5" fill="#fff" stroke="#4A5A8A" stroke-width="1"/><rect x="7.5" y="8.5" width="4.5" height="2.5" fill="#fff" stroke="#4A5A8A" stroke-width="1"/>
<path d="M1 13.5 H15 M14.5 3 V14" stroke="#3A4660" stroke-width="1"/></svg>
<div class="a" style="left:42.00px;top:239px;font-size:11.5px;color:#000;line-height:normal;letter-spacing:-1.050px">ПРЕДПРИЯТИЯ</div>
<div class="gh" style="top:258px"></div>
<svg style="left:189px;top:264px" width="8" height="9" viewBox="0 0 8 9"><path d="M.5 4 L4 .8 L7.5 4 M.5 8 L4 4.8 L7.5 8" fill="none" stroke="#3E67A6" stroke-width="1.5"/></svg>
<div class="a" style="left:13.00px;top:261px;font-size:12px;color:#15428B;line-height:normal;font-weight:bold;letter-spacing:-0.032px">НАЛОГИ</div>
<svg style="left:15px;top:280px" width="17" height="14" viewBox="0 0 17 14">
<rect x=".5" y=".5" width="15" height="12" fill="#FFFFFF" stroke="#5F729C"/><rect x="1" y="1" width="14" height="2.6" fill="#7389B8"/>
<rect x="11" y="4" width="4" height="8.5" fill="#DCE6F8"/>
<path d="M1 6.5 H15 M1 9.5 H15 M5.5 3.5 V12.5 M10.5 3.5 V12.5" stroke="#93A3C3" stroke-width="1"/><path d="M1 12.5 H16 M15.5 2 V13" stroke="#3E4E6E" stroke-width="1.1"/></svg>
<div class="a" style="left:42.00px;top:282px;font-size:11.5px;color:#000;line-height:normal;letter-spacing:-0.215px">НАЛОГИ : таблица</div>
<svg style="left:15px;top:304px" width="17" height="16" viewBox="0 0 17 16">
<rect x="5.5" y=".5" width="10" height="10" fill="#FFFFFF" stroke="#3F5E6C"/><rect x="6" y="1" width="9" height="2.3" fill="#4C9696"/>
<path d="M11.5 5.5 H13.5 M11.5 7.5 H13.5 M11.5 9.5 H13.5" stroke="#7890A0" stroke-width="1"/>
<rect x=".5" y="4.5" width="10" height="10" fill="#FFFFFF" stroke="#3F5E6C"/><rect x="1" y="5" width="9" height="2.3" fill="#4C9696"/>
<path d="M2 9.5 H4 M2 11.5 H4 M2 13.5 H4 M6.5 9.5 H8.5 M6.5 13.5 H8.5" stroke="#7890A0" stroke-width="1"/><path d="M1 14.5 H11 M10.5 5 V15" stroke="#2E4450" stroke-width=".8"/></svg>
<div class="a" style="left:42.00px;top:306px;font-size:11.5px;color:#000;line-height:normal;letter-spacing:0.030px">План с расшифровками код...</div>
<div class="gh" style="top:325px"></div>
<svg style="left:189px;top:331px" width="8" height="9" viewBox="0 0 8 9"><path d="M.5 4 L4 .8 L7.5 4 M.5 8 L4 4.8 L7.5 8" fill="none" stroke="#3E67A6" stroke-width="1.5"/></svg>
<div class="a" style="left:13.00px;top:328px;font-size:12px;color:#15428B;line-height:normal;font-weight:bold;letter-spacing:0.274px">ПЛАН</div>
<svg style="left:15px;top:347px" width="17" height="14" viewBox="0 0 17 14">
<rect x=".5" y=".5" width="15" height="12" fill="#FFFFFF" stroke="#5F729C"/><rect x="1" y="1" width="14" height="2.6" fill="#7389B8"/>
<rect x="11" y="4" width="4" height="8.5" fill="#DCE6F8"/>
<path d="M1 6.5 H15 M1 9.5 H15 M5.5 3.5 V12.5 M10.5 3.5 V12.5" stroke="#93A3C3" stroke-width="1"/><path d="M1 12.5 H16 M15.5 2 V13" stroke="#3E4E6E" stroke-width="1.1"/></svg>
<div class="a" style="left:42.00px;top:349px;font-size:11.5px;color:#000;line-height:normal;letter-spacing:-0.123px">ПЛАН : таблица</div>
<svg style="left:15px;top:371px" width="17" height="16" viewBox="0 0 17 16">
<rect x="5.5" y=".5" width="10" height="10" fill="#FFFFFF" stroke="#3F5E6C"/><rect x="6" y="1" width="9" height="2.3" fill="#4C9696"/>
<path d="M11.5 5.5 H13.5 M11.5 7.5 H13.5 M11.5 9.5 H13.5" stroke="#7890A0" stroke-width="1"/>
<rect x=".5" y="4.5" width="10" height="10" fill="#FFFFFF" stroke="#3F5E6C"/><rect x="1" y="5" width="9" height="2.3" fill="#4C9696"/>
<path d="M2 9.5 H4 M2 11.5 H4 M2 13.5 H4 M6.5 9.5 H8.5 M6.5 13.5 H8.5" stroke="#7890A0" stroke-width="1"/><path d="M1 14.5 H11 M10.5 5 V15" stroke="#2E4450" stroke-width=".8"/></svg>
<div class="a" style="left:42.00px;top:373px;font-size:11.5px;color:#000;line-height:normal;letter-spacing:-0.202px">План в $$</div>
<svg style="left:15px;top:395px" width="17" height="16" viewBox="0 0 17 16">
<rect x="5.5" y=".5" width="10" height="10" fill="#FFFFFF" stroke="#3F5E6C"/><rect x="6" y="1" width="9" height="2.3" fill="#4C9696"/>
<path d="M11.5 5.5 H13.5 M11.5 7.5 H13.5 M11.5 9.5 H13.5" stroke="#7890A0" stroke-width="1"/>
<rect x=".5" y="4.5" width="10" height="10" fill="#FFFFFF" stroke="#3F5E6C"/><rect x="1" y="5" width="9" height="2.3" fill="#4C9696"/>
<path d="M2 9.5 H4 M2 11.5 H4 M2 13.5 H4 M6.5 9.5 H8.5 M6.5 13.5 H8.5" stroke="#7890A0" stroke-width="1"/><path d="M1 14.5 H11 M10.5 5 V15" stroke="#2E4450" stroke-width=".8"/></svg>
<div class="a" style="left:42.00px;top:397px;font-size:11.5px;color:#000;line-height:normal">План по заданному коду на...</div>
<svg style="left:15px;top:419px" width="17" height="16" viewBox="0 0 17 16">
<rect x="5.5" y=".5" width="10" height="10" fill="#FFFFFF" stroke="#3F5E6C"/><rect x="6" y="1" width="9" height="2.3" fill="#4C9696"/>
<path d="M11.5 5.5 H13.5 M11.5 7.5 H13.5 M11.5 9.5 H13.5" stroke="#7890A0" stroke-width="1"/>
<rect x=".5" y="4.5" width="10" height="10" fill="#FFFFFF" stroke="#3F5E6C"/><rect x="1" y="5" width="9" height="2.3" fill="#4C9696"/>
<path d="M2 9.5 H4 M2 11.5 H4 M2 13.5 H4 M6.5 9.5 H8.5 M6.5 13.5 H8.5" stroke="#7890A0" stroke-width="1"/><path d="M1 14.5 H11 M10.5 5 V15" stroke="#2E4450" stroke-width=".8"/></svg>
<div class="a" style="left:42.00px;top:421px;font-size:11.5px;color:#000;line-height:normal;letter-spacing:0.030px">План с расшифровками код...</div>
<div class="gh" style="top:440px"></div>
<svg style="left:189px;top:446px" width="8" height="9" viewBox="0 0 8 9"><path d="M.5 4 L4 .8 L7.5 4 M.5 8 L4 4.8 L7.5 8" fill="none" stroke="#3E67A6" stroke-width="1.5"/></svg>
<div class="a" style="left:13.00px;top:443px;font-size:12px;color:#15428B;line-height:normal;font-weight:bold;letter-spacing:0.097px">ПЛАТЕЖИ</div>
<svg style="left:15px;top:462px" width="17" height="14" viewBox="0 0 17 14">
<rect x=".5" y=".5" width="15" height="12" fill="#FFFFFF" stroke="#5F729C"/><rect x="1" y="1" width="14" height="2.6" fill="#7389B8"/>
<rect x="11" y="4" width="4" height="8.5" fill="#DCE6F8"/>
<path d="M1 6.5 H15 M1 9.5 H15 M5.5 3.5 V12.5 M10.5 3.5 V12.5" stroke="#93A3C3" stroke-width="1"/><path d="M1 12.5 H16 M15.5 2 V13" stroke="#3E4E6E" stroke-width="1.1"/></svg>
<div class="a" style="left:42.00px;top:464px;font-size:11.5px;color:#000;line-height:normal;letter-spacing:-0.242px">ПЛАТЕЖИ : таблица</div>
<div class="a" style="left:4px;top:483px;width:205px;height:24px;background:#DDDDDD"></div>
<svg style="left:15px;top:486px" width="17" height="16" viewBox="0 0 17 16">
<rect x="5.5" y=".5" width="10" height="10" fill="#FFFFFF" stroke="#3F5E6C"/><rect x="6" y="1" width="9" height="2.3" fill="#4C9696"/>
<path d="M11.5 5.5 H13.5 M11.5 7.5 H13.5 M11.5 9.5 H13.5" stroke="#7890A0" stroke-width="1"/>
<rect x=".5" y="4.5" width="10" height="10" fill="#FFFFFF" stroke="#3F5E6C"/><rect x="1" y="5" width="9" height="2.3" fill="#4C9696"/>
<path d="M2 9.5 H4 M2 11.5 H4 M2 13.5 H4 M6.5 9.5 H8.5 M6.5 13.5 H8.5" stroke="#7890A0" stroke-width="1"/><path d="M1 14.5 H11 M10.5 5 V15" stroke="#2E4450" stroke-width=".8"/></svg>
<div class="a" style="left:42.00px;top:488px;font-size:11.5px;color:#000;line-height:normal;letter-spacing:-0.194px">Квартал</div>
<svg style="left:15px;top:510px" width="17" height="16" viewBox="0 0 17 16">
<rect x="5.5" y=".5" width="10" height="10" fill="#FFFFFF" stroke="#3F5E6C"/><rect x="6" y="1" width="9" height="2.3" fill="#4C9696"/>
<path d="M11.5 5.5 H13.5 M11.5 7.5 H13.5 M11.5 9.5 H13.5" stroke="#7890A0" stroke-width="1"/>
<rect x=".5" y="4.5" width="10" height="10" fill="#FFFFFF" stroke="#3F5E6C"/><rect x="1" y="5" width="9" height="2.3" fill="#4C9696"/>
<path d="M2 9.5 H4 M2 11.5 H4 M2 13.5 H4 M6.5 9.5 H8.5 M6.5 13.5 H8.5" stroke="#7890A0" stroke-width="1"/><path d="M1 14.5 H11 M10.5 5 V15" stroke="#2E4450" stroke-width=".8"/></svg>
<div class="a" style="left:42.00px;top:512px;font-size:11.5px;color:#000;line-height:normal;letter-spacing:-0.020px">Месяц платежа</div>
<svg style="left:15px;top:534px" width="17" height="16" viewBox="0 0 17 16">
<rect x="5.5" y=".5" width="10" height="10" fill="#FFFFFF" stroke="#3F5E6C"/><rect x="6" y="1" width="9" height="2.3" fill="#4C9696"/>
<path d="M11.5 5.5 H13.5 M11.5 7.5 H13.5 M11.5 9.5 H13.5" stroke="#7890A0" stroke-width="1"/>
<rect x=".5" y="4.5" width="10" height="10" fill="#FFFFFF" stroke="#3F5E6C"/><rect x="1" y="5" width="9" height="2.3" fill="#4C9696"/>
<path d="M2 9.5 H4 M2 11.5 H4 M2 13.5 H4 M6.5 9.5 H8.5 M6.5 13.5 H8.5" stroke="#7890A0" stroke-width="1"/><path d="M1 14.5 H11 M10.5 5 V15" stroke="#2E4450" stroke-width=".8"/></svg>
<div class="a" style="left:42.00px;top:536px;font-size:11.5px;color:#000;line-height:normal;letter-spacing:0.037px">Наименование месяца плат...</div>
<svg style="left:15px;top:558px" width="17" height="16" viewBox="0 0 17 16">
<rect x="5.5" y=".5" width="10" height="10" fill="#FFFFFF" stroke="#3F5E6C"/><rect x="6" y="1" width="9" height="2.3" fill="#4C9696"/>
<path d="M11.5 5.5 H13.5 M11.5 7.5 H13.5 M11.5 9.5 H13.5" stroke="#7890A0" stroke-width="1"/>
<rect x=".5" y="4.5" width="10" height="10" fill="#FFFFFF" stroke="#3F5E6C"/><rect x="1" y="5" width="9" height="2.3" fill="#4C9696"/>
<path d="M2 9.5 H4 M2 11.5 H4 M2 13.5 H4 M6.5 9.5 H8.5 M6.5 13.5 H8.5" stroke="#7890A0" stroke-width="1"/><path d="M1 14.5 H11 M10.5 5 V15" stroke="#2E4450" stroke-width=".8"/></svg>
<div class="a" style="left:42.00px;top:560px;font-size:11.5px;color:#000;line-height:normal;letter-spacing:-0.034px">Числовой месяц платежа</div>
<svg style="left:15px;top:582px" width="16" height="15" viewBox="0 0 16 15">
<rect x=".5" y=".5" width="14" height="13" fill="#F8FAFE" stroke="#6A7898"/><rect x="1" y="1" width="13" height="2.6" fill="#C8507A"/>
<path d="M3 5.5 H6 M3 9.5 H6" stroke="#4A5A8A" stroke-width="1"/><rect x="7.5" y="4.5" width="4.5" height="2.5" fill="#fff" stroke="#4A5A8A" stroke-width="1"/><rect x="7.5" y="8.5" width="4.5" height="2.5" fill="#fff" stroke="#4A5A8A" stroke-width="1"/>
<path d="M1 13.5 H15 M14.5 3 V14" stroke="#3A4660" stroke-width="1"/></svg>
<div class="a" style="left:42.00px;top:584px;font-size:11.5px;color:#000;line-height:normal;letter-spacing:-0.611px">ПЛАТЕЖИ</div>
<div class="gh" style="top:603px"></div>
<svg style="left:189px;top:609px" width="8" height="9" viewBox="0 0 8 9"><path d="M.5 4 L4 .8 L7.5 4 M.5 8 L4 4.8 L7.5 8" fill="none" stroke="#3E67A6" stroke-width="1.5"/></svg>
<div class="a" style="left:13.00px;top:606px;font-size:12px;color:#15428B;line-height:normal;font-weight:bold;letter-spacing:-0.057px">СПЕЦИФИКАЦИЯ ПЛАТЕЖ...</div>
<svg style="left:15px;top:625px" width="17" height="14" viewBox="0 0 17 14">
<rect x=".5" y=".5" width="15" height="12" fill="#FFFFFF" stroke="#5F729C"/><rect x="1" y="1" width="14" height="2.6" fill="#7389B8"/>
<rect x="11" y="4" width="4" height="8.5" fill="#DCE6F8"/>
<path d="M1 6.5 H15 M1 9.5 H15 M5.5 3.5 V12.5 M10.5 3.5 V12.5" stroke="#93A3C3" stroke-width="1"/><path d="M1 12.5 H16 M15.5 2 V13" stroke="#3E4E6E" stroke-width="1.1"/></svg>
<div class="a" style="left:42.00px;top:627px;font-size:11.5px;color:#000;line-height:normal;letter-spacing:-0.678px">СПЕЦИФИКАЦИЯ ПЛАТЕЖЕЙ ...</div>
<svg style="left:15px;top:649px" width="16" height="15" viewBox="0 0 16 15">
<rect x=".5" y=".5" width="14" height="13" fill="#F8FAFE" stroke="#6A7898"/><rect x="1" y="1" width="13" height="2.6" fill="#C8507A"/>
<path d="M3 5.5 H6 M3 9.5 H6" stroke="#4A5A8A" stroke-width="1"/><rect x="7.5" y="4.5" width="4.5" height="2.5" fill="#fff" stroke="#4A5A8A" stroke-width="1"/><rect x="7.5" y="8.5" width="4.5" height="2.5" fill="#fff" stroke="#4A5A8A" stroke-width="1"/>
<path d="M1 13.5 H15 M14.5 3 V14" stroke="#3A4660" stroke-width="1"/></svg>
<div class="a" style="left:42.00px;top:651px;font-size:11.5px;color:#000;line-height:normal;letter-spacing:-0.678px">СПЕЦИФИКАЦИЯ ПЛАТЕЖЕЙ ...</div>
<div class="a" style="left:210px;top:142px;width:5px;height:1px;background:#6591CD"></div>
<div class="a" style="left:210px;top:143px;width:4px;height:575px;background:linear-gradient(90deg,#ADD0FD 0,#ADD0FD 3px,#E8F2FE 3px)"></div>
<div class="a" style="left:214px;top:142px;width:1px;height:576px;background:#6D97D0"></div>
<div class="a" style="left:215px;top:142px;width:809px;height:24px;background:#86A9D8;border-bottom:1px solid #6E96CD"></div>
<svg style="left:215px;top:142px" width="90" height="25" viewBox="0 0 90 25">
<defs><linearGradient id="dt" x1="0" y1="0" x2="0" y2="1"><stop offset="0" stop-color="#FDE4B8"/><stop offset=".45" stop-color="#FBCB80"/><stop offset=".55" stop-color="#F9B952"/><stop offset="1" stop-color="#FDDB86"/></linearGradient></defs>
<path d="M.5 24.5 V5 Q.5 .5 5 .5 H72 Q75 .5 77 3 L88 24.5Z" fill="url(#dt)" stroke="#A38556" stroke-width="1"/></svg>
<svg style="left:221px;top:146px" width="17" height="16" viewBox="0 0 17 16">
<rect x="5.5" y=".5" width="10" height="10" fill="#FFFFFF" stroke="#3F5E6C"/><rect x="6" y="1" width="9" height="2.3" fill="#4C9696"/>
<path d="M11.5 5.5 H13.5 M11.5 7.5 H13.5 M11.5 9.5 H13.5" stroke="#7890A0" stroke-width="1"/>
<rect x=".5" y="4.5" width="10" height="10" fill="#FFFFFF" stroke="#3F5E6C"/><rect x="1" y="5" width="9" height="2.3" fill="#4C9696"/>
<path d="M2 9.5 H4 M2 11.5 H4 M2 13.5 H4 M6.5 9.5 H8.5 M6.5 13.5 H8.5" stroke="#7890A0" stroke-width="1"/><path d="M1 14.5 H11 M10.5 5 V15" stroke="#2E4450" stroke-width=".8"/></svg>
<div class="a" style="left:244.90px;top:148px;font-size:11.5px;color:#000;line-height:normal;font-weight:bold;letter-spacing:-0.423px">Квартал</div>
<svg style="left:1007px;top:150px" width="9" height="8"><path d="M1 .5 L8 7.5 M8 .5 L1 7.5" stroke="#000" stroke-width="1.8"/></svg>
<div class="a" style="left:215px;top:166px;width:809px;height:107px;background:#EBEEF1"></div>
<div class="a" style="left:1009px;top:166px;width:15px;height:107px;background:linear-gradient(90deg,#F4F4F4,#ECECEC);border-left:1px solid #D6E3F2"></div>
<svg style="left:1014px;top:171px" width="9" height="6"><path d="M0 5.5 L4.5 0 L9 5.5Z" fill="#4A5A80"/></svg>
<div class="a" style="left:1011px;top:182px;width:14px;height:16px;border:1px solid #6A7FA8;border-radius:2px;background:linear-gradient(90deg,#F6F8FB,#DDE4EE)"></div>
<svg style="left:1014px;top:186px" width="9" height="8"><path d="M0 .5 H8 M0 2.5 H8 M0 4.5 H8 M0 6.5 H8" stroke="#555" stroke-width="1"/></svg>
<svg style="left:1014px;top:264px" width="9" height="6"><path d="M0 0 L4.5 5.5 L9 0Z" fill="#4A5A80"/></svg>
<div class="a" style="left:262px;top:177px;width:144px;height:94px;border:1px solid #4E6FA6;border-radius:6px 6px 0 0;background:#C1D7F4"></div>
<div class="a" style="left:263px;top:178px;width:142px;height:18px;border-radius:5px 5px 0 0;background:linear-gradient(#E7F0FC,#D3E3F9 60%,#DCE8FA);border-bottom:1px solid #A9C6EE"></div>
<div class="a" style="left:271.00px;top:182px;font-size:11.5px;color:#7F7F7F;line-height:normal;letter-spacing:-0.777px">ПЛАТЕЖИ</div>
<div class="a" style="left:266px;top:197px;width:137px;height:70px;background:#fff"></div>
<div class="a" style="left:297px;top:200px;font-size:11.5px">*</div>
<svg style="left:283px;top:214px" width="9" height="12" viewBox="0 0 9 12"><path d="M1.5 .5 H6 Q7.5 .5 7.5 2 V3.5 Q7.5 5 6 5 H5.2 V7 L6.3 7.6 L5.2 8.3 L6.3 9 L5.2 9.8 V11 Q4.5 11.7 3.6 11.2 L2.7 10.5 V5 H1.5 Q.5 5 .5 3.5 V2 Q.5 .5 1.5 .5Z" fill="#F2EA80" stroke="#5A3E0C" stroke-width=".9"/><circle cx="3.8" cy="2.4" r=".8" fill="#8A3A20"/><path d="M3.6 5.5 V10.5" stroke="#D8B830" stroke-width=".8"/></svg>
<svg style="left:283px;top:230px" width="9" height="12" viewBox="0 0 9 12"><path d="M1.5 .5 H6 Q7.5 .5 7.5 2 V3.5 Q7.5 5 6 5 H5.2 V7 L6.3 7.6 L5.2 8.3 L6.3 9 L5.2 9.8 V11 Q4.5 11.7 3.6 11.2 L2.7 10.5 V5 H1.5 Q.5 5 .5 3.5 V2 Q.5 .5 1.5 .5Z" fill="#F2EA80" stroke="#5A3E0C" stroke-width=".9"/><circle cx="3.8" cy="2.4" r=".8" fill="#8A3A20"/><path d="M3.6 5.5 V10.5" stroke="#D8B830" stroke-width=".8"/></svg>
<div class="a" style="left:296.70px;top:215px;font-size:11.5px;color:#000;line-height:normal;letter-spacing:-0.061px">№ документа</div>
<div class="a" style="left:296.70px;top:231px;font-size:11.5px;color:#000;line-height:normal;letter-spacing:0.127px">Код предприятия</div>
<div class="a" style="left:296.70px;top:247px;font-size:11.5px;color:#000;line-height:normal;letter-spacing:-0.088px">Дата</div>
<div class="a" style="left:1009px;top:273px;width:15px;height:17px;background:#F0F0F0"></div>
<div class="a" style="left:215px;top:273px;width:794px;height:18px;background:linear-gradient(#FAFAFA,#EEEEEE);border-top:1px solid #D4E2F2"></div>
<svg style="left:220px;top:278px" width="6" height="10"><path d="M5.5 0 L0 4.5 L5.5 9Z" fill="#4A5A80"/></svg>
<div class="a" style="left:231px;top:275px;width:16px;height:14px;border:1px solid #6A7FA8;border-radius:2px;background:linear-gradient(#F6F8FB,#DDE4EE)"></div>
<svg style="left:235px;top:279px" width="8" height="7"><path d="M.5 0 V7 M2.5 0 V7 M4.5 0 V7 M6.5 0 V7" stroke="#555" stroke-width="1"/></svg>
<svg style="left:998px;top:278px" width="6" height="10"><path d="M0 0 L5.5 4.5 L0 9Z" fill="#4A5A80"/></svg>
<div class="a" style="left:215px;top:290px;width:809px;height:7px;border-top:1px solid #6D97D0;border-bottom:1px solid #6D97D0;background:linear-gradient(#DCEAFC,#B7D4F8)"></div>
<svg style="left:603px;top:292px" width="38" height="4"><rect x="0" y="1" width="2" height="2" fill="#fff"/><rect x="0.6" y="0" width="2" height="2" fill="#222"/><rect x="4" y="1" width="2" height="2" fill="#fff"/><rect x="4.6" y="0" width="2" height="2" fill="#222"/><rect x="8" y="1" width="2" height="2" fill="#fff"/><rect x="8.6" y="0" width="2" height="2" fill="#222"/><rect x="12" y="1" width="2" height="2" fill="#fff"/><rect x="12.6" y="0" width="2" height="2" fill="#222"/><rect x="16" y="1" width="2" height="2" fill="#fff"/><rect x="16.6" y="0" width="2" height="2" fill="#222"/><rect x="20" y="1" width="2" height="2" fill="#fff"/><rect x="20.6" y="0" width="2" height="2" fill="#222"/><rect x="24" y="1" width="2" height="2" fill="#fff"/><rect x="24.6" y="0" width="2" height="2" fill="#222"/><rect x="28" y="1" width="2" height="2" fill="#fff"/><rect x="28.6" y="0" width="2" height="2" fill="#222"/><rect x="32" y="1" width="2" height="2" fill="#fff"/><rect x="32.6" y="0" width="2" height="2" fill="#222"/></svg>
<div class="a" style="left:215px;top:297px;width:809px;height:421px;background:#D5E3F2"></div>
<div class="a" style="left:315.70px;top:310px;font-size:11.5px;color:#000;line-height:normal;letter-spacing:-0.102px">Поле:</div>
<div class="a" style="left:271.20px;top:325px;font-size:11.5px;color:#000;line-height:normal;letter-spacing:0.038px">Имя таблицы:</div>
<div class="a" style="left:277.90px;top:340px;font-size:11.5px;color:#000;line-height:normal;letter-spacing:0.179px">Сортировка:</div>
<div class="a" style="left:258.30px;top:355px;font-size:11.5px;color:#000;line-height:normal;letter-spacing:0.040px">Вывод на экран:</div>
<div class="a" style="left:257.20px;top:370px;font-size:11.5px;color:#000;line-height:normal;letter-spacing:0.055px">Условие отбора:</div>
<div class="a" style="left:322.80px;top:385px;font-size:11.5px;color:#000;line-height:normal;letter-spacing:0.149px">или:</div>
<div class="a" style="left:352px;top:302px;width:667px;height:219px;border:1px solid #000;background:#fff"></div>
<div class="a" style="left:353px;top:304px;width:665px;height:5px;background:#D4D0C8"></div>
<div class="a" style="left:467px;top:303px;width:1px;height:201px;background:#A5B8D0"></div>
<div class="a" style="left:468px;top:304px;width:1px;height:5px;background:#fff"></div>
<div class="a" style="left:582px;top:303px;width:1px;height:201px;background:#A5B8D0"></div>
<div class="a" style="left:583px;top:304px;width:1px;height:5px;background:#fff"></div>
<div class="a" style="left:791px;top:303px;width:1px;height:201px;background:#A5B8D0"></div>
<div class="a" style="left:792px;top:304px;width:1px;height:5px;background:#fff"></div>
<div class="a" style="left:906px;top:303px;width:1px;height:201px;background:#A5B8D0"></div>
<div class="a" style="left:907px;top:304px;width:1px;height:5px;background:#fff"></div>
<div class="a" style="left:353px;top:324px;width:665px;height:1px;background:#C5D3E6"></div>
<div class="a" style="left:353px;top:339px;width:665px;height:1px;background:#C5D3E6"></div>
<div class="a" style="left:353px;top:354px;width:665px;height:1px;background:#C5D3E6"></div>
<div class="a" style="left:353px;top:369px;width:665px;height:1px;background:#C5D3E6"></div>
<div class="a" style="left:353px;top:384px;width:665px;height:1px;background:#C5D3E6"></div>
<div class="a" style="left:353px;top:399px;width:665px;height:1px;background:#C5D3E6"></div>
<div class="a" style="left:353px;top:414px;width:665px;height:1px;background:#C5D3E6"></div>
<div class="a" style="left:353px;top:429px;width:665px;height:1px;background:#C5D3E6"></div>
<div class="a" style="left:353px;top:444px;width:665px;height:1px;background:#C5D3E6"></div>
<div class="a" style="left:353px;top:459px;width:665px;height:1px;background:#C5D3E6"></div>
<div class="a" style="left:353px;top:474px;width:665px;height:1px;background:#C5D3E6"></div>
<div class="a" style="left:353px;top:489px;width:665px;height:1px;background:#C5D3E6"></div>
<div class="a" style="left:353px;top:504px;width:665px;height:1px;background:#C5D3E6"></div>
<div class="a" style="left:356.00px;top:311px;font-size:11.5px;color:#000;line-height:normal;letter-spacing:-0.031px">№ документа</div>
<div class="a" style="left:470.50px;top:311px;font-size:11.5px;color:#000;line-height:normal;letter-spacing:0.149px">Код предприятия</div>
<div class="a" style="left:586.00px;top:311px;font-size:11.5px;color:#000;line-height:normal;letter-spacing:-0.244px">Квартал: Format([ПЛАТЕЖИ]![Дата];&quot;q&quot;)</div>
<div class="a" style="left:356.00px;top:326px;font-size:11.5px;color:#000;line-height:normal;letter-spacing:-0.727px">ПЛАТЕЖИ</div>
<div class="a" style="left:470.50px;top:326px;font-size:11.5px;color:#000;line-height:normal;letter-spacing:-0.727px">ПЛАТЕЖИ</div>
<svg style="left:404px;top:356px" width="11" height="11" viewBox="0 0 11 11"><rect x=".5" y=".5" width="10" height="10" fill="#fff" stroke="#000"/><path d="M2.2 5.2 L4.5 7.8 L8.8 2.6" fill="none" stroke="#000" stroke-width="2.2"/></svg>
<svg style="left:519px;top:356px" width="11" height="11" viewBox="0 0 11 11"><rect x=".5" y=".5" width="10" height="10" fill="#fff" stroke="#000"/><path d="M2.2 5.2 L4.5 7.8 L8.8 2.6" fill="none" stroke="#000" stroke-width="2.2"/></svg>
<svg style="left:681px;top:356px" width="11" height="11" viewBox="0 0 11 11"><rect x=".5" y=".5" width="10" height="10" fill="#fff" stroke="#000"/><path d="M2.2 5.2 L4.5 7.8 L8.8 2.6" fill="none" stroke="#000" stroke-width="2.2"/></svg>
<svg style="left:843px;top:356px" width="11" height="11" viewBox="0 0 11 11"><rect x=".5" y=".5" width="10" height="10" fill="#fff" stroke="#000"/></svg>
<svg style="left:958px;top:356px" width="11" height="11" viewBox="0 0 11 11"><rect x=".5" y=".5" width="10" height="10" fill="#fff" stroke="#000"/></svg>
<div class="a" style="left:353px;top:504px;width:665px;height:16px;background:linear-gradient(#E4E4E4 0,#E4E4E4 1px,#FAFAFA 1px,#EEEEEE 12px,#F4F4F4)"></div>
<svg style="left:358px;top:508px" width="6" height="10"><path d="M5.5 0 L0 4.5 L5.5 9Z" fill="#4A5A80"/></svg>
<div class="a" style="left:369px;top:505px;width:16px;height:14px;border:1px solid #6A7FA8;border-radius:2px;background:linear-gradient(#F6F8FB,#DDE4EE)"></div>
<svg style="left:373px;top:509px" width="8" height="7"><path d="M.5 0 V7 M2.5 0 V7 M4.5 0 V7 M6.5 0 V7" stroke="#555" stroke-width="1"/></svg>
<svg style="left:1008px;top:508px" width="6" height="10"><path d="M0 0 L5.5 4.5 L0 9Z" fill="#4A5A80"/></svg>
<div class="a" style="left:0;top:717px;width:1024px;height:23px;background:linear-gradient(#5784C2 0,#5784C2 2px,#FFFFFF 2px,#FFFFFF 3px,#D3E4F9 3px,#C9DDF8 7px,#B3CFF3 10px,#BCD6F5 14px,#D0E2F8 20px,#D0E2F8 22px,#B2D0FA 22px)"></div>
<div class="a" style="left:8.25px;top:723px;font-size:11.5px;color:#15428B;line-height:normal;letter-spacing:0.248px">Готово</div>
<div class="a" style="left:501px;top:720px;width:1px;height:19px;background:#A7C4EA;box-shadow:1px 0 0 #fff"></div>
<div class="a" style="left:926px;top:719px;width:1px;height:21px;background:#9DBDE8;box-shadow:1px 0 0 #E8F1FD"></div>
<div class="a" style="left:931px;top:720px;width:93px;height:19px;border:1px solid #7297CF;border-right:none;border-radius:3px 0 0 3px;background:linear-gradient(#E6F0FD,#D2E3FA 45%,#C2D9F8 50%,#D6E7FC)"></div>
<div class="a" style="left:1005px;top:721px;width:17px;height:17px;border-radius:0 2px 2px 0;background:linear-gradient(#FBE3B8,#F8D08A 45%,#F3B23A 50%,#F8CF70)"></div>
<div class="a" style="left:950px;top:721px;width:1px;height:17px;background:#A9C4E8;box-shadow:1px 0 0 rgba(255,255,255,.6)"></div>
<div class="a" style="left:968px;top:721px;width:1px;height:17px;background:#A9C4E8;box-shadow:1px 0 0 rgba(255,255,255,.6)"></div>
<div class="a" style="left:986px;top:721px;width:1px;height:17px;background:#A9C4E8;box-shadow:1px 0 0 rgba(255,255,255,.6)"></div>
<div class="a" style="left:1004px;top:721px;width:1px;height:17px;background:#A9C4E8;box-shadow:1px 0 0 rgba(255,255,255,.6)"></div>
<svg style="left:935px;top:724px" width="12" height="11" viewBox="0 0 12 11"><rect x=".5" y=".5" width="11" height="10" fill="#F4F4F4" stroke="#4A4A4A"/><rect x="1" y="1" width="10" height="1.6" fill="#4A4A4A"/><path d="M2.5 3 V10 M4 5 H10.5 M4 7.5 H10.5 M7 4.5 V9" stroke="#4A4A4A" stroke-width="1"/></svg>
<svg style="left:954px;top:724px" width="12" height="11" viewBox="0 0 12 11"><path d="M4 0 h7 v3.5 h-7z M0 3.5 h11 v3.5 h-11z M0 7 h11 v4 h-11z" fill="#8A8A8A"/><path d="M4 3.5 V11 M7.5 0 V11 M0 7 H11 M4 3.5 H11" stroke="#F0F0F0" stroke-width=".8"/><circle cx="9.5" cy="8.5" r="1.3" fill="#555"/></svg>
<svg style="left:972px;top:724px" width="12" height="11" viewBox="0 0 12 11"><path d="M1 1 V10 H11" fill="none" stroke="#555" stroke-width="1.4"/><rect x="3" y="3" width="2.5" height="5.5" fill="#fff" stroke="#555" stroke-width=".9"/><rect x="6.5" y=".8" width="2.8" height="7.7" fill="#fff" stroke="#555" stroke-width=".9"/></svg>
<div class="a" style="left:988px;top:724px;font-size:9px;font-weight:bold;color:#3A3A3A;letter-spacing:-.4px">SQL</div>
<svg style="left:1008px;top:723px" width="13" height="13" viewBox="0 0 13 13"><path d="M1 .5 V7 H6Z" fill="#E8E8E8" stroke="#4A4A4A" stroke-width="1"/><path d="M3 8 L11 .8" stroke="#4A4A4A" stroke-width="2"/><rect x="1" y="9" width="11" height="3" fill="#4A4A4A"/><path d="M2.5 10.5 h1 M5 10.5 h1 M7.5 10.5 h1 M10 10.5 h1" stroke="#E0E0E0" stroke-width="1"/></svg>
<div class="a" style="left:0;top:740px;width:1024px;height:28px;background:linear-gradient(#D4D0C8 0,#D4D0C8 1px,#FFFFFF 1px,#FFFFFF 2px,#D4D0C8 2px)"></div>
<div class="a" style="left:2px;top:744px;width:52px;height:23px;border:1px solid;border-color:#fff #404040 #404040 #fff;box-shadow:inset -1px -1px 0 #808080"></div>
<svg style="left:4px;top:747px" width="16" height="16" viewBox="0 0 16 16">
<path d="M1 3 Q4 1 7 2.5 L6 7 Q3 5.8 0 7Z" fill="#F05A22"/><path d="M8.5 3 Q11.5 1.5 15 2.5 L14 7.5 Q11 6.5 7.5 7.5Z" fill="#7CB82F"/>
<path d="M0 8.5 Q3 7.5 6 8.5 L5 13 Q2 11.5 -1 13Z" fill="#2D8AE0"/><path d="M7 9 Q10.5 8 14 9 L13 14 Q10 12.8 6 14Z" fill="#FDBA12"/></svg>
<div class="a" style="left:21.10px;top:749px;font-size:12px;color:#000;line-height:normal;font-weight:bold;letter-spacing:0.307px">Пуск</div>
<svg style="left:61px;top:748px" width="16" height="14" viewBox="0 0 16 14"><defs><linearGradient id="q1" x1="0" y1="0" x2="1" y2="0"><stop offset="0" stop-color="#0A28B8"/><stop offset=".7" stop-color="#5A7AF0"/><stop offset="1" stop-color="#2040C8"/></linearGradient></defs>
<rect x="0" y="0" width="12.5" height="13" fill="url(#q1)"/><path d="M3 0 L9 13 M6 0 L12 11" stroke="#8FA8FF" stroke-width="1.2" opacity=".5"/><rect x="12.5" y="0" width="3.5" height="13" fill="#223"/><path d="M14.2 1.5 v1.5 M14.2 5 v1.5 M14.2 8.5 v1.5" stroke="#7FD8F0" stroke-width="1.2"/><rect x="0" y="13" width="16" height="1" fill="#8A8A8A"/></svg>
<svg style="left:85px;top:747px" width="16" height="17" viewBox="0 0 16 17"><path d="M2.5 1 H8 L9.5 2.5 H13.5 V14 H2.5Z" fill="#F4DC98" stroke="#D8B868" stroke-width=".8"/><rect x="12.5" y="7" width="2" height="7" fill="#FFF4D0" stroke="#D8B868" stroke-width=".6"/>
<circle cx="7" cy="8" r="3.6" fill="#D8EEF0" stroke="#8A9AA0" stroke-width="1.2"/><path d="M4.5 10.8 L1 14.5" stroke="#7A8088" stroke-width="1.8" stroke-linecap="round"/><path d="M1.5 14.2 L3 12.7" stroke="#fff" stroke-width=".7"/></svg>
<svg style="left:107px;top:747px" width="17" height="16" viewBox="0 0 17 16"><path d="M1 9 L9 1 H11.5 L16 5 L8 13.5 H5.5Z" fill="#F0F0F0" stroke="#1A1A1A" stroke-width="1.2" stroke-linejoin="round"/>
<path d="M12.5 2.5 L5 8.5 H8.5 L4 14 L13.5 7 H9.5 Z" fill="#F29A1E" stroke="#A85A08" stroke-width=".5"/></svg>
<svg style="left:130px;top:746px" width="17" height="17" viewBox="0 0 17 17"><defs><radialGradient id="ffb" cx="55%" cy="40%" r="55%"><stop offset="0" stop-color="#7FC8F0"/><stop offset="1" stop-color="#1E5AB0"/></radialGradient><linearGradient id="ffo" x1="0" y1="0" x2="0" y2="1"><stop offset="0" stop-color="#F8A030"/><stop offset="1" stop-color="#D84A10"/></linearGradient></defs>
<circle cx="9" cy="8" r="6.8" fill="url(#ffb)"/><path d="M2.5 1.5 Q.5 8 3 12.5 Q7 16.5 12 15.5 Q16.5 14 16.5 9 Q15 13.5 10.5 13.5 Q6.5 13 6 9.5 Q6.5 7.5 9 8 Q8.5 5.5 6.5 5.5 Q6.5 3.5 9 2.5 Q5 2 4 4 Q3 3 2.5 1.5Z" fill="url(#ffo)"/></svg>
<div class="a" style="left:162px;top:744px;width:160px;height:23px;border:1px solid;border-color:#fff #404040 #404040 #fff;box-shadow:inset -1px -1px 0 #808080"></div>
<svg style="left:167px;top:747px" width="16" height="17" viewBox="0 0 16 17"><path d="M2.5 1 H8 L9.5 2.5 H13.5 V14 H2.5Z" fill="#F4DC98" stroke="#D8B868" stroke-width=".8"/><rect x="12.5" y="7" width="2" height="7" fill="#FFF4D0" stroke="#D8B868" stroke-width=".6"/><circle cx="7" cy="8" r="3.6" fill="#D8EEF0" stroke="#8A9AA0" stroke-width="1.2"/><path d="M4.5 10.8 L1 14.5" stroke="#7A8088" stroke-width="1.8" stroke-linecap="round"/></svg>
<div class="a" style="left:185.50px;top:749px;font-size:11.5px;color:#000;line-height:normal;letter-spacing:-0.172px">Уральские пельмени (Т...</div>
<div class="a" style="left:325px;top:744px;width:160px;height:23px;border:1px solid;border-color:#fff #404040 #404040 #fff;box-shadow:inset -1px -1px 0 #808080"></div>
<svg style="left:330px;top:747px" width="16" height="16"><defs><radialGradient id="bsg" cx="45%" cy="35%" r="60%"><stop offset="0" stop-color="#A8E4FA"/><stop offset="1" stop-color="#2A9AD0"/></radialGradient></defs><circle cx="8" cy="8" r="7.3" fill="url(#bsg)" stroke="#6AB8DA" stroke-width=".6"/><text x="3" y="10.3" font-size="5.5" font-family="Liberation Sans" font-weight="bold" fill="#fff">BS</text></svg>
<div class="a" style="left:348.50px;top:749px;font-size:11.5px;color:#000;line-height:normal;letter-spacing:-0.623px">BSplayer</div>
<div class="a" style="left:488px;top:744px;width:160px;height:23px;border:1px solid;border-color:#fff #404040 #404040 #fff;box-shadow:inset -1px -1px 0 #808080"></div>
<svg style="left:491px;top:747px" width="17" height="16" viewBox="0 0 17 16"><path d="M4.5 .5 H12 L15.5 4 V15.5 H4.5Z" fill="#F4F8FF" stroke="#5A78B8" stroke-width="1"/><path d="M6 6.5 H14 M6 9 H14 M6 11.5 H14" stroke="#A8BCE0" stroke-width=".8"/><rect x=".5" y="3" width="9.5" height="8" fill="#2E5CC8" stroke="#1A3A90" stroke-width=".6"/><text x="1.3" y="10" font-size="7.5" font-weight="bold" font-family="Liberation Sans" fill="#fff">W</text></svg>
<div class="a" style="left:511.10px;top:749px;font-size:11.5px;color:#000;line-height:normal;letter-spacing:-0.406px">ACCESS 2007.doc [Режи...</div>
<div class="a" style="left:651px;top:744px;width:160px;height:23px;border:1px solid;border-color:#404040 #fff #fff #404040;box-shadow:inset 1px 1px 0 #808080;background:repeating-conic-gradient(#FFFFFF 0 25%,#D4D0C8 0 50%) 0 0/2px 2px"></div>
<svg style="left:656px;top:747px" width="16" height="16" viewBox="0 0 16 16"><defs><linearGradient id="acg" x1="0" y1="0" x2="1" y2="1"><stop offset="0" stop-color="#E87AA8"/><stop offset="1" stop-color="#A8285A"/></linearGradient></defs><rect x=".5" y=".5" width="14" height="15" rx="2" fill="url(#acg)" stroke="#8A1A48" stroke-width=".8"/><rect x="2.5" y="2.5" width="10" height="11" fill="#F6D0E0" opacity=".55"/><circle cx="10.5" cy="5.5" r="2.8" fill="#fff"/><circle cx="10.8" cy="5.2" r=".9" fill="#C04070"/><path d="M8.8 7.2 L3.5 13.5 M5 11.5 L6.5 13 M6.5 9.8 L7.8 11.2" stroke="#fff" stroke-width="1.6"/></svg>
<div class="a" style="left:674.50px;top:749px;font-size:11.5px;color:#000;line-height:normal;font-weight:bold;letter-spacing:0.074px">Microsoft Access - На...</div>
<div class="a" style="left:927px;top:744px;width:95px;height:22px;border:1px solid;border-color:#808080 #fff #fff #808080"></div>
<svg style="left:932px;top:752px" width="9" height="7"><path d="M4 .5 L1 3.5 L4 6.5 M8 .5 L5 3.5 L8 6.5" fill="none" stroke="#000" stroke-width="1.5"/></svg>
<svg style="left:946px;top:748px" width="16" height="16"><path d="M1 1 H6 V6 L11 1 H14 L7 10 L1 15Z" fill="#E8142A"/><path d="M8 8 L15 15 H1Z" fill="#F8E050" stroke="#6A5A10" stroke-width=".8"/><path d="M8 10 V13" stroke="#000" stroke-width="1"/></svg>
<div class="a" style="left:963px;top:747px;width:16px;height:16px;background:#000080"></div>
<div class="a" style="left:964px;top:748px;font-size:11.5px;color:#fff">Ru</div>
<div class="a" style="left:988.50px;top:749px;font-size:11.5px;color:#000;line-height:normal;letter-spacing:-0.061px">1:09</div>
</body></html>
